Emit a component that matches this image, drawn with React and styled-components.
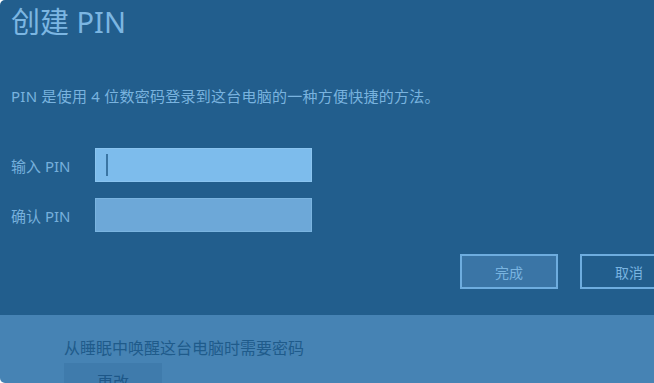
import styled, { createGlobalStyle } from "styled-components";

const GlobalStyle = createGlobalStyle`
  html, body {
    margin: 0;
    padding: 0;
    background: #ffffff;
    overflow: hidden;
  }
  body {
    font-family: "Noto Sans", "Noto Sans CJK SC", sans-serif;
  }
`;

const Page = styled.div`
  width: 654px;
  height: 383px;
  overflow: hidden;
`;

const Dialog = styled.div`
  width: 700px;
  height: 383px;
  border-radius: 5px 0 0 5px;
  overflow: hidden;
  display: flex;
  flex-direction: column;
`;

const TopPanel = styled.div`
  flex-shrink: 0;
  height: 315px;
  box-sizing: border-box;
  padding: 4px 22px 0 11px;
  background: #225e8d;
  display: flex;
  flex-direction: column;
`;

const Title = styled.div`
  font-size: 29px;
  line-height: 36px;
  color: #7cb6e2;
`;

const Description = styled.div`
  margin-top: 46px;
  font-size: 15px;
  line-height: 20px;
  letter-spacing: 0.25px;
  color: #79b3df;
`;

const Form = styled.div`
  margin-top: 42px;
  display: flex;
  flex-direction: column;
  gap: 16px;
`;

const Row = styled.div`
  display: flex;
  align-items: center;
`;

const Label = styled.div`
  width: 84px;
  font-size: 15px;
  color: #76b0dc;
`;

const Field = styled.div`
  position: relative;
  width: 217px;
  height: 34px;
  box-sizing: border-box;
  border: 1px solid ${(p) => (p.$active ? "#8ac4ef" : "#7ab4e0")};
  background: ${(p) => (p.$active ? "#7dbcec" : "#6da8d8")};
`;

const Caret = styled.div`
  position: absolute;
  left: 10px;
  top: 5px;
  width: 2px;
  height: 22px;
  background: #3a75a3;
`;

const Buttons = styled.div`
  margin-top: 22px;
  display: flex;
  justify-content: flex-end;
  gap: 22px;
`;

const Button = styled.div`
  width: 98px;
  height: 35px;
  box-sizing: border-box;
  border: 2px solid #6eaddf;
  background: ${(p) => (p.$primary ? "#3a75a6" : "#225e8d")};
  color: #79b4e0;
  font-size: 14px;
  display: flex;
  align-items: center;
  justify-content: center;
`;

const BottomPanel = styled.div`
  flex: 1;
  background: #4683b4;
  padding: 22px 0 0 64px;
  display: flex;
  flex-direction: column;
  align-items: flex-start;
`;

const Note = styled.div`
  font-size: 16px;
  line-height: 22px;
  color: #1f5b8b;
`;

const ChangeButton = styled.div`
  margin-top: 4px;
  width: 98px;
  height: 34px;
  background: #3f7bac;
  color: #1d5788;
  font-size: 16px;
  display: flex;
  justify-content: center;
  padding-top: 6px;
  box-sizing: border-box;
`;

export default function App() {
  return (
    <Page>
      <GlobalStyle />
      <Dialog>
        <TopPanel>
          <Title>创建 PIN</Title>
          <Description>
            PIN 是使用 4 位数密码登录到这台电脑的一种方便快捷的方法。
          </Description>
          <Form>
            <Row>
              <Label>输入 PIN</Label>
              <Field $active>
                <Caret />
              </Field>
            </Row>
            <Row>
              <Label>确认 PIN</Label>
              <Field />
            </Row>
          </Form>
          <Buttons>
            <Button $primary>完成</Button>
            <Button>取消</Button>
          </Buttons>
        </TopPanel>
        <BottomPanel>
          <Note>从睡眠中唤醒这台电脑时需要密码</Note>
          <ChangeButton>更改</ChangeButton>
        </BottomPanel>
      </Dialog>
    </Page>
  );
}
